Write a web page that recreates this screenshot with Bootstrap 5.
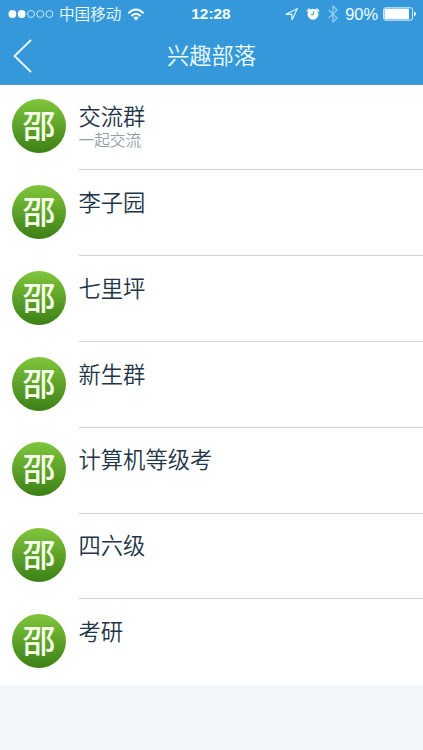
<!DOCTYPE html>
<html lang="zh-CN">
<head>
<meta charset="utf-8">
<meta name="viewport" content="width=device-width, initial-scale=1">
<title>兴趣部落</title>
<link href="https://cdn.jsdelivr.net/npm/bootstrap@5.3.0/dist/css/bootstrap.min.css" rel="stylesheet">
<style>
  body { background: #f1f6fa; font-family: "Liberation Sans", "Noto Sans CJK SC", sans-serif; font-weight: 350; overflow: hidden; }
  .app-head { background: #3598db; height: 84.6px; border-bottom: 1px solid #5b97c6; color: #f2feff; }
  .status { height: 28px; line-height: 26px; display: grid; grid-template-columns: 1fr auto 1fr; grid-template-rows: 28px; padding: 0 7px 0 8px; }
  .carrier { font-size: 15.6px; margin-left: 5px; margin-right: 6px; padding-top: 1px; }
  .clock { font-size: 15.4px; line-height: 28px; font-weight: 700; margin-right: 2px; }
  .charge { font-size: 16.4px; margin: 0 5px 0 7px; }
  .title-bar { height: 55px; display: grid; grid-template-columns: 60px 1fr 60px; }
  .page-title { font-size: 22.3px; font-weight: 350; padding-top: 4px; }
  .tribe { height: 85.8px; padding-left: 12px; background: #fff; }
  .avatar { width: 54px; height: 54px; margin-top: 14.6px; border-radius: 50%; background: linear-gradient(#80c63c, #3c8016); color: #f6ffe9; font-size: 33px; line-height: 55px; font-weight: 500; }
  .tribe-text { margin-left: 12.5px; border-bottom: 1px solid #ccd5da; padding-top: 20.7px; }
  .tribe:last-child .tribe-text { border-bottom: 0; }
  .tribe-name { font-size: 22.3px; line-height: 26px; color: #1e3547; }
  .tribe-note { font-size: 15.7px; line-height: 19px; color: #919eaa; }
</style>
<script src="https://cdn.jsdelivr.net/npm/bootstrap@5.3.0/dist/js/bootstrap.bundle.min.js"></script>
</head>
<body>
<header class="app-head">
  <div class="status">
    <div class="d-flex align-items-center text-nowrap">
      <svg width="46" height="10" viewBox="0 0 46 10"><g fill="#fff"><circle cx="4.4" cy="5" r="3.9"/><circle cx="13.7" cy="5" r="3.9"/></g><g fill="none" stroke="#d8f3ff" stroke-width=".9"><circle cx="23" cy="5" r="3.5"/><circle cx="32.2" cy="5" r="3.5"/><circle cx="41.4" cy="5" r="3.5"/></g></svg>
      <span class="carrier">中国移动</span>
      <svg width="18" height="13" viewBox="0 0 18 13"><g fill="none" stroke="#fff" stroke-width="2"><path d="M1.5 5.2Q9-2.2 16.5 5.2"/><path d="M4.3 8Q9 3.6 13.7 8"/></g><path d="M6.2 9.7Q9 7.4 11.8 9.7L9 12.5z" fill="#fff"/></svg>
    </div>
    <div class="clock">12:28</div>
    <div class="d-flex align-items-center justify-content-end">
      <svg width="13" height="13" viewBox="0 0 13 13"><path d="M12.2.8L.8 6.3l6-.1L7 12z" fill="none" stroke="#d8f7ff" stroke-width="1.2"/></svg>
      <svg class="mx-2" width="14" height="14" viewBox="0 0 14 14"><circle cx="7" cy="7.2" r="5.5" fill="#fff"/><path d="M.9 4.2L3.6 1.4M13.1 4.2L10.4 1.4" stroke="#fff" stroke-width="1.4"/><path d="M7.4 4.2v3.5H4.9" fill="none" stroke="#3598db" stroke-width="1"/></svg>
      <svg width="10" height="18" viewBox="0 0 10 18"><path d="M.7 5l8.4 8L5 17V1l4.1 4L.7 13" fill="none" stroke="#92ccf5" stroke-width="1.3"/></svg>
      <span class="charge">90%</span>
      <svg width="33" height="14" viewBox="0 0 33 14"><rect x=".6" y=".8" width="29" height="12.4" rx="2" fill="none" stroke="#d8f3ff"/><rect x="1.5" y="1.8" width="24.5" height="10.4" rx=".7" fill="#fff"/><path d="M31 4.8q2 .6 2 2.2t-2 2.2z" fill="#fff"/></svg>
    </div>
  </div>
  <div class="title-bar align-items-center">
    <svg width="34" height="34" viewBox="0 0 34 34"><path d="M31 1L14.5 17 31 33" fill="none" stroke="#effcff" stroke-width="1.8"/></svg>
    <h1 class="page-title text-center mb-0">兴趣部落</h1>
  </div>
</header>
<main>
  <div class="tribe d-flex"><div class="avatar text-center flex-shrink-0">邵</div><div class="tribe-text flex-grow-1"><div class="tribe-name">交流群</div><div class="tribe-note">一起交流</div></div></div>
  <div class="tribe d-flex"><div class="avatar text-center flex-shrink-0">邵</div><div class="tribe-text flex-grow-1"><div class="tribe-name">李子园</div></div></div>
  <div class="tribe d-flex"><div class="avatar text-center flex-shrink-0">邵</div><div class="tribe-text flex-grow-1"><div class="tribe-name">七里坪</div></div></div>
  <div class="tribe d-flex"><div class="avatar text-center flex-shrink-0">邵</div><div class="tribe-text flex-grow-1"><div class="tribe-name">新生群</div></div></div>
  <div class="tribe d-flex"><div class="avatar text-center flex-shrink-0">邵</div><div class="tribe-text flex-grow-1"><div class="tribe-name">计算机等级考</div></div></div>
  <div class="tribe d-flex"><div class="avatar text-center flex-shrink-0">邵</div><div class="tribe-text flex-grow-1"><div class="tribe-name">四六级</div></div></div>
  <div class="tribe d-flex"><div class="avatar text-center flex-shrink-0">邵</div><div class="tribe-text flex-grow-1"><div class="tribe-name">考研</div></div></div>
</main>
</body>
</html>
